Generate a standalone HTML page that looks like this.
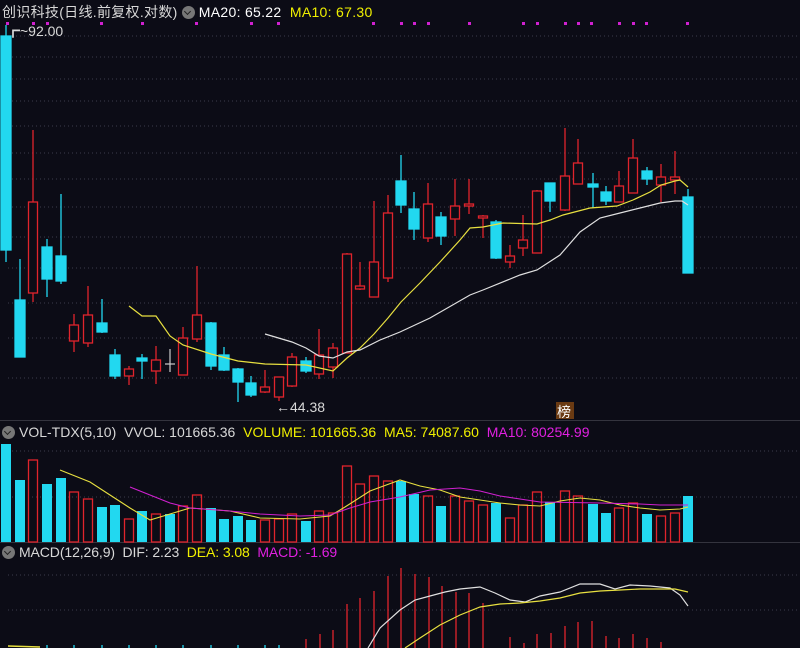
<!DOCTYPE html>
<html><head><meta charset="utf-8"><style>
html,body{margin:0;padding:0;background:#0c0c16;width:800px;height:648px;overflow:hidden}
.t{position:absolute;font-family:"Liberation Sans","Noto Sans CJK SC",sans-serif;font-size:14px;white-space:nowrap;letter-spacing:0px}
.ic{display:inline-block;width:13px;height:13px;border-radius:50%;background:#777;vertical-align:-2px;margin-right:4px;position:relative}
.ic:after{content:"";position:absolute;left:3px;top:3px;width:4px;height:4px;border-right:1.5px solid #222;border-bottom:1.5px solid #222;transform:rotate(45deg)}
</style></head><body>
<svg width="800" height="648" style="position:absolute;left:0;top:0">
<g stroke="#3c3c4c" stroke-width="1" stroke-dasharray="1,3">
<line x1="8" y1="36" x2="800" y2="36"/><line x1="8" y1="57" x2="800" y2="57"/><line x1="8" y1="79" x2="800" y2="79"/><line x1="8" y1="101" x2="800" y2="101"/><line x1="8" y1="126" x2="800" y2="126"/><line x1="8" y1="153" x2="800" y2="153"/><line x1="8" y1="179" x2="800" y2="179"/><line x1="8" y1="207" x2="800" y2="207"/><line x1="8" y1="237" x2="800" y2="237"/><line x1="8" y1="268" x2="800" y2="268"/><line x1="8" y1="303" x2="800" y2="303"/><line x1="8" y1="338" x2="800" y2="338"/><line x1="8" y1="378" x2="800" y2="378"/>
<line x1="8" y1="451" x2="800" y2="451"/><line x1="8" y1="497" x2="800" y2="497"/>
<line x1="8" y1="575" x2="800" y2="575"/><line x1="8" y1="610" x2="800" y2="610"/>
</g>
<line x1="0" y1="420.5" x2="800" y2="420.5" stroke="#34343e"/>
<line x1="0" y1="542.5" x2="800" y2="542.5" stroke="#34343e"/>
<g fill="#d020d0">
<rect x="6" y="22" width="3" height="3"/><rect x="32" y="22" width="3" height="3"/><rect x="46" y="22" width="3" height="3"/><rect x="100" y="22" width="3" height="3"/><rect x="141" y="22" width="3" height="3"/><rect x="195" y="22" width="3" height="3"/><rect x="250" y="22" width="3" height="3"/><rect x="277" y="22" width="3" height="3"/><rect x="372" y="22" width="3" height="3"/><rect x="400" y="22" width="3" height="3"/><rect x="413" y="22" width="3" height="3"/><rect x="427" y="22" width="3" height="3"/><rect x="468" y="22" width="3" height="3"/><rect x="522" y="22" width="3" height="3"/><rect x="536" y="22" width="3" height="3"/><rect x="564" y="22" width="3" height="3"/><rect x="577" y="22" width="3" height="3"/><rect x="590" y="22" width="3" height="3"/><rect x="618" y="22" width="3" height="3"/><rect x="632" y="22" width="3" height="3"/><rect x="645" y="22" width="3" height="3"/><rect x="686" y="22" width="3" height="3"/>
</g>
<g stroke="#22d8f0" fill="#22d8f0" stroke-width="1.3">
<line x1="6" y1="25" x2="6" y2="262"/><rect x="1" y="36" width="10" height="214"/>
<line x1="20" y1="259" x2="20" y2="357"/><rect x="15" y="300" width="10" height="57"/>
<line x1="47" y1="239" x2="47" y2="297"/><rect x="42" y="247" width="10" height="32"/>
<line x1="61" y1="194" x2="61" y2="284"/><rect x="56" y="256" width="10" height="25"/>
<line x1="102" y1="299" x2="102" y2="333"/><rect x="97" y="323" width="10" height="9"/>
<line x1="115" y1="349" x2="115" y2="379"/><rect x="110" y="355" width="10" height="21"/>
<line x1="142" y1="354" x2="142" y2="379"/><rect x="137" y="358" width="10" height="3"/>
<line x1="211" y1="322" x2="211" y2="370"/><rect x="206" y="323" width="10" height="43"/>
<line x1="224" y1="347" x2="224" y2="371"/><rect x="219" y="355" width="10" height="15"/>
<line x1="238" y1="368" x2="238" y2="402"/><rect x="233" y="369" width="10" height="13"/>
<line x1="251" y1="376" x2="251" y2="397"/><rect x="246" y="383" width="10" height="12"/>
<line x1="306" y1="357" x2="306" y2="373"/><rect x="301" y="361" width="10" height="10"/>
<line x1="401" y1="155" x2="401" y2="213"/><rect x="396" y="181" width="10" height="24"/>
<line x1="414" y1="192" x2="414" y2="240"/><rect x="409" y="209" width="10" height="20"/>
<line x1="441" y1="212" x2="441" y2="245"/><rect x="436" y="217" width="10" height="19"/>
<line x1="496" y1="220" x2="496" y2="259"/><rect x="491" y="222" width="10" height="36"/>
<line x1="550" y1="183" x2="550" y2="212"/><rect x="545" y="183" width="10" height="18"/>
<line x1="593" y1="173" x2="593" y2="208"/><rect x="588" y="184" width="10" height="3"/>
<line x1="606" y1="186" x2="606" y2="205"/><rect x="601" y="192" width="10" height="9"/>
<line x1="647" y1="167" x2="647" y2="185"/><rect x="642" y="171" width="10" height="8"/>
<line x1="688" y1="189" x2="688" y2="197"/><rect x="683" y="197" width="10" height="76"/>
</g>
<line x1="170" y1="349" x2="170" y2="372" stroke="#ccc" stroke-width="1.2"/><line x1="165" y1="364" x2="175" y2="364" stroke="#ccc" stroke-width="1.2"/>
<g stroke="#e0242c" fill="#0c0c16" stroke-width="1.3">
<line x1="33" y1="130" x2="33" y2="302"/><rect x="28.5" y="202" width="9" height="91"/>
<line x1="74" y1="314" x2="74" y2="352"/><rect x="69.5" y="325" width="9" height="16"/>
<line x1="88" y1="286" x2="88" y2="347"/><rect x="83.5" y="315" width="9" height="28"/>
<line x1="129" y1="366" x2="129" y2="385"/><rect x="124.5" y="369" width="9" height="7"/>
<line x1="156" y1="346" x2="156" y2="384"/><rect x="151.5" y="360" width="9" height="11"/>
<line x1="183" y1="327" x2="183" y2="375"/><rect x="178.5" y="338" width="9" height="37"/>
<line x1="197" y1="266" x2="197" y2="342"/><rect x="192.5" y="315" width="9" height="24"/>
<line x1="265" y1="370" x2="265" y2="393"/><rect x="260.5" y="387" width="9" height="5"/>
<line x1="279" y1="377" x2="279" y2="401"/><rect x="274.5" y="377" width="9" height="20"/>
<line x1="292" y1="353" x2="292" y2="387"/><rect x="287.5" y="357" width="9" height="29"/>
<line x1="319" y1="329" x2="319" y2="379"/><rect x="314.5" y="355" width="9" height="19"/>
<line x1="333" y1="343" x2="333" y2="378"/><rect x="328.5" y="348" width="9" height="19"/>
<line x1="347" y1="253" x2="347" y2="353"/><rect x="342.5" y="254" width="9" height="99"/>
<line x1="360" y1="262" x2="360" y2="290"/><rect x="355.5" y="286" width="9" height="3"/>
<line x1="374" y1="201" x2="374" y2="297"/><rect x="369.5" y="262" width="9" height="35"/>
<line x1="388" y1="195" x2="388" y2="282"/><rect x="383.5" y="213" width="9" height="65"/>
<line x1="428" y1="183" x2="428" y2="242"/><rect x="423.5" y="204" width="9" height="34"/>
<line x1="455" y1="179" x2="455" y2="236"/><rect x="450.5" y="206" width="9" height="13"/>
<line x1="469" y1="179" x2="469" y2="214"/><rect x="464.5" y="204" width="9" height="2"/>
<line x1="483" y1="215" x2="483" y2="238"/><rect x="478.5" y="216" width="9" height="2"/>
<line x1="510" y1="245" x2="510" y2="268"/><rect x="505.5" y="256" width="9" height="6"/>
<line x1="523" y1="215" x2="523" y2="256"/><rect x="518.5" y="240" width="9" height="8"/>
<line x1="537" y1="190" x2="537" y2="253"/><rect x="532.5" y="191" width="9" height="62"/>
<line x1="565" y1="128" x2="565" y2="211"/><rect x="560.5" y="176" width="9" height="34"/>
<line x1="578" y1="139" x2="578" y2="184"/><rect x="573.5" y="163" width="9" height="21"/>
<line x1="619" y1="171" x2="619" y2="202"/><rect x="614.5" y="186" width="9" height="16"/>
<line x1="633" y1="139" x2="633" y2="193"/><rect x="628.5" y="158" width="9" height="35"/>
<line x1="661" y1="164" x2="661" y2="202"/><rect x="656.5" y="177" width="9" height="8"/>
<line x1="675" y1="151" x2="675" y2="194"/><rect x="670.5" y="177" width="9" height="3"/>
</g>
<polyline fill="none" stroke="#e8e040" stroke-width="1.2" points="129,306 142,316 156,316 170,336 183,345 211,354 238,361 265,364 306,365 333,371 347,358 360,348 374,334 388,318 401,302 420,283 440,262 460,240 470,228 483,227 503,223 537,224 550,220 563,215 590,208 617,206 633,200 650,192 661,185 675,181 680,180 688,187"/>
<polyline fill="none" stroke="#e0e0e0" stroke-width="1.2" points="265,334 292,342 306,348 319,356 333,358 347,352 360,350 380,340 400,332 430,318 470,295 483,290 520,275 537,270 560,255 580,232 600,218 620,213 640,208 660,203 675,201 682,201 688,205"/>
<g fill="#22d8f0">
<rect x="1" y="444" width="10" height="98"/><rect x="15" y="480" width="10" height="62"/><rect x="42" y="484" width="10" height="58"/><rect x="56" y="478" width="10" height="64"/><rect x="97" y="507" width="10" height="35"/><rect x="110" y="505" width="10" height="37"/><rect x="137" y="511" width="10" height="31"/><rect x="165" y="514" width="10" height="28"/><rect x="206" y="508" width="10" height="34"/><rect x="219" y="519" width="10" height="23"/><rect x="233" y="516" width="10" height="26"/><rect x="246" y="520" width="10" height="22"/><rect x="301" y="521" width="10" height="21"/><rect x="396" y="481" width="10" height="61"/><rect x="409" y="494" width="10" height="48"/><rect x="436" y="506" width="10" height="36"/><rect x="491" y="503" width="10" height="39"/><rect x="545" y="502" width="10" height="40"/><rect x="588" y="504" width="10" height="38"/><rect x="601" y="513" width="10" height="29"/><rect x="642" y="514" width="10" height="28"/><rect x="683" y="496" width="10" height="46"/>
</g>
<g fill="none" stroke="#e0242c" stroke-width="1.3">
<rect x="28.5" y="460" width="9" height="82"/><rect x="69.5" y="492" width="9" height="50"/><rect x="83.5" y="499" width="9" height="43"/><rect x="124.5" y="519" width="9" height="23"/><rect x="151.5" y="514" width="9" height="28"/><rect x="178.5" y="506" width="9" height="36"/><rect x="192.5" y="495" width="9" height="47"/><rect x="260.5" y="520" width="9" height="22"/><rect x="274.5" y="519" width="9" height="23"/><rect x="287.5" y="514" width="9" height="28"/><rect x="314.5" y="511" width="9" height="31"/><rect x="328.5" y="513" width="9" height="29"/><rect x="342.5" y="466" width="9" height="76"/><rect x="355.5" y="484" width="9" height="58"/><rect x="369.5" y="476" width="9" height="66"/><rect x="383.5" y="481" width="9" height="61"/><rect x="423.5" y="496" width="9" height="46"/><rect x="450.5" y="496" width="9" height="46"/><rect x="464.5" y="501" width="9" height="41"/><rect x="478.5" y="505" width="9" height="37"/><rect x="505.5" y="518" width="9" height="24"/><rect x="518.5" y="505" width="9" height="37"/><rect x="532.5" y="492" width="9" height="50"/><rect x="560.5" y="491" width="9" height="51"/><rect x="573.5" y="496" width="9" height="46"/><rect x="614.5" y="508" width="9" height="34"/><rect x="628.5" y="503" width="9" height="39"/><rect x="656.5" y="516" width="9" height="26"/><rect x="670.5" y="513" width="9" height="29"/>
</g>
<polyline fill="none" stroke="#e8e040" stroke-width="1.1" points="60,470 90,482 110,495 130,508 150,520 170,514 190,508 230,511 260,518 300,519 330,516 345,507 370,491 400,480 420,486 440,490 460,497 480,500 500,503 520,505 540,506 560,501 580,498 600,500 620,505 640,508 660,510 680,509 688,507"/>
<polyline fill="none" stroke="#d020d0" stroke-width="1.1" points="130,487 150,495 170,503 190,508 230,511 260,514 300,516 330,515 350,508 370,502 400,497 430,490 460,488 480,491 500,496 520,499 540,502 600,503 640,504 660,505 688,505"/>
<g stroke="#e0242c" stroke-width="1.3">
<line x1="306" y1="648" x2="306" y2="639"/><line x1="320" y1="648" x2="320" y2="634"/><line x1="333" y1="648" x2="333" y2="630"/><line x1="347" y1="648" x2="347" y2="604"/><line x1="360" y1="648" x2="360" y2="598"/><line x1="374" y1="648" x2="374" y2="591"/><line x1="388" y1="648" x2="388" y2="576"/><line x1="401" y1="648" x2="401" y2="568"/><line x1="415" y1="648" x2="415" y2="574"/><line x1="429" y1="648" x2="429" y2="577"/><line x1="442" y1="648" x2="442" y2="586"/><line x1="456" y1="648" x2="456" y2="592"/><line x1="469" y1="648" x2="469" y2="593"/><line x1="483" y1="648" x2="483" y2="603"/><line x1="510" y1="648" x2="510" y2="637"/><line x1="524" y1="648" x2="524" y2="643"/><line x1="537" y1="648" x2="537" y2="634"/><line x1="551" y1="648" x2="551" y2="633"/><line x1="565" y1="648" x2="565" y2="626"/><line x1="578" y1="648" x2="578" y2="622"/><line x1="592" y1="648" x2="592" y2="621"/><line x1="606" y1="648" x2="606" y2="636"/><line x1="619" y1="648" x2="619" y2="638"/><line x1="633" y1="648" x2="633" y2="634"/><line x1="647" y1="648" x2="647" y2="638"/><line x1="661" y1="648" x2="661" y2="642"/>
</g>
<g stroke="#22d8f0" stroke-width="1.3"><line x1="47" y1="648" x2="47" y2="645"/><line x1="74" y1="648" x2="74" y2="645"/><line x1="102" y1="648" x2="102" y2="645"/><line x1="129" y1="648" x2="129" y2="645"/><line x1="156" y1="648" x2="156" y2="645"/><line x1="183" y1="648" x2="183" y2="645"/><line x1="211" y1="648" x2="211" y2="645"/><line x1="238" y1="648" x2="238" y2="645"/><line x1="265" y1="648" x2="265" y2="645"/><line x1="279" y1="648" x2="279" y2="645"/></g>
<polyline fill="none" stroke="#e0e0e0" stroke-width="1.2" points="368,648 380,628 400,610 415,600 430,596 445,592 460,589 480,587 495,593 510,600 525,602 540,596 560,592 580,584 600,584 615,589 630,585 650,586 670,588 680,595 688,606"/>
<polyline fill="none" stroke="#e8e040" stroke-width="1.2" points="405,648 420,638 440,625 460,615 480,607 500,604 520,603 540,601 560,598 580,593 600,591 620,590 640,589 675,589 688,592"/>
<polyline fill="none" stroke="#e8e040" stroke-width="1.5" points="8,646 40,647"/>
<rect x="556" y="402" width="18" height="17" fill="#6a3a12"/>
</svg>
<div class="t" style="left:2px;top:2px;color:#d8d8d8;font-size:14px;letter-spacing:0.3px">创识科技(日线.前复权.对数) <span class="ic"></span><span style="color:#fff">MA20: 65.22</span> &nbsp;<span style="color:#f0f000">MA10: 67.30</span></div>
<div class="t" style="left:6px;top:21px;color:#d8d8d8;font-size:14px">┏~92.00</div>
<div class="t" style="left:276px;top:399px;color:#d8d8d8;font-size:14px">←44.38</div>
<div class="t" style="left:557px;top:402px;color:#fff;font-size:14px">榜</div>
<div class="t" style="left:2px;top:424px;color:#d8d8d8;letter-spacing:0px"><span class="ic"></span>VOL-TDX(5,10) &nbsp;VVOL: 101665.36 &nbsp;<span style="color:#f0f000">VOLUME: 101665.36 &nbsp;MA5: 74087.60</span> &nbsp;<span style="color:#e020e0">MA10: 80254.99</span></div>
<div class="t" style="left:2px;top:544px;color:#d8d8d8;letter-spacing:-0.1px"><span class="ic"></span>MACD(12,26,9) &nbsp;DIF: 2.23 &nbsp;<span style="color:#f0f000">DEA: 3.08</span> &nbsp;<span style="color:#e020e0">MACD: -1.69</span></div>
</body></html>
